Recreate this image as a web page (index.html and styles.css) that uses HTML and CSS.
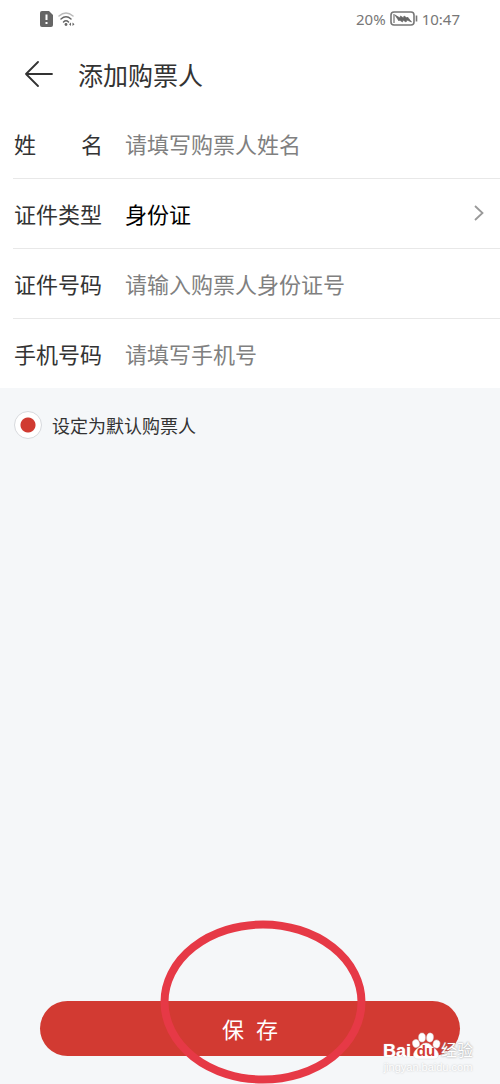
FILE: index.html
```html
<!DOCTYPE html>
<html lang="zh-CN">
<head>
<meta charset="utf-8">
<meta name="viewport" content="width=device-width, initial-scale=1">
<title>添加购票人</title>
<link rel="stylesheet" href="styles.css">
</head>
<body>
<div class="screen">
  <div class="status">
    <div class="status-group">
      <svg width="13" height="16" viewBox="0 0 13 16" aria-hidden="true">
        <path d="M2 0h7l4 4v10a2 2 0 0 1-2 2H2a2 2 0 0 1-2-2V2a2 2 0 0 1 2-2z" fill="#666"/>
        <path d="M6.500 3.500v5.500M6.500 11v2" stroke="#fff" stroke-width="2"/>
      </svg>
      <svg width="18" height="15" viewBox="0 0 18 15" fill="none" stroke-width="1.500" stroke-linecap="round" aria-hidden="true">
        <path d="M1 4Q8 -2 15 4" stroke="#bbb"/>
        <path d="M3 7Q8 2.500 13 7M5.500 10Q8 7.500 10.500 10" stroke="#666"/>
        <circle cx="8" cy="12.500" r="1.400" fill="#666"/>
        <path d="M13 10.500l-2 1.700 2 1.700zM14.500 10.500l2 1.700-2 1.700z" fill="#666"/>
      </svg>
    </div>
    <div class="status-group status-right">
      <span>20%</span>
      <svg width="28" height="16" viewBox="0 0 28 16" fill="none" stroke="#777" aria-hidden="true">
        <rect x="1" y="1" width="23" height="13" rx="3" stroke-width="1.600"/>
        <path d="M4 3v9" stroke="#aaa" stroke-width="2"/>
        <path d="M5 4l5 3 .5-2 3 2 .5-2 3 2 .5-1 4 5-4.500-2-1 2-3-2-.5 2-3-2-.5 1z" fill="#666" stroke="#666" stroke-width=".7"/>
        <path d="M26.500 4.500v6" stroke-width="1.600"/>
      </svg>
      <time>10:47</time>
    </div>
  </div>

  <header class="header">
    <button class="back" type="button" aria-label="返回">
      <svg width="28" height="26" viewBox="0 0 28 26" fill="none" stroke="#333" stroke-width="1.800" stroke-linecap="round" stroke-linejoin="round" aria-hidden="true">
        <path d="M27 13H1M13 1L1 13l12 12"/>
      </svg>
    </button>
    <h1 class="title">添加购票人</h1>
  </header>

  <form class="form">
    <div class="fields">
      <div class="row">
        <label class="label label-spread" for="name"><span>姓</span><span>名</span></label>
        <input class="input" id="name" type="text" placeholder="请填写购票人姓名">
      </div>
      <div class="row">
        <label class="label" for="type">证件类型</label>
        <select class="input select" id="type"><option>身份证</option></select>
        <svg width="10" height="16" viewBox="0 0 10 16" fill="none" stroke="#999" stroke-width="1.800" aria-hidden="true">
          <path d="M1 1l7.500 7L1 15"/>
        </svg>
      </div>
      <div class="row">
        <label class="label" for="number">证件号码</label>
        <input class="input" id="number" type="text" placeholder="请输入购票人身份证号">
      </div>
      <div class="row">
        <label class="label" for="phone">手机号码</label>
        <input class="input" id="phone" type="tel" placeholder="请填写手机号">
      </div>
    </div>

    <label class="default">
      <input class="radio" type="radio" checked>
      <span>设定为默认购票人</span>
    </label>

    <div class="footer">
      <button class="save" type="button"><span>保</span><span>存</span></button>
      <svg class="ring" width="206" height="164" viewBox="0 0 206 164" fill="none" aria-hidden="true">
        <ellipse cx="103" cy="82" rx="98.500" ry="77.500" stroke="#e63946" stroke-width="8"/>
      </svg>
      <div class="watermark">
        <div class="brand">
          <span>Bai</span>
          <span class="paw">
            <svg width="30" height="28" viewBox="0 0 30 28" fill="#fff" stroke="#ddd" stroke-width=".5" aria-hidden="true">
              <ellipse cx="5" cy="11.500" rx="3.400" ry="4" transform="rotate(-15 5 11.500)"/>
              <ellipse cx="11" cy="5.500" rx="3.400" ry="4.500"/>
              <ellipse cx="19" cy="5.500" rx="3.400" ry="4.500" transform="rotate(8 19 5.500)"/>
              <ellipse cx="25.500" cy="12" rx="3.400" ry="4" transform="rotate(15 25.500 12)"/>
              <path d="M15 11c-4 0-5 3-8 5-6 4-6 11 0 11h16c6 0 6-7 0-11-3-2-4-5-8-5z"/>
            </svg>
            <span class="du">du</span>
          </span>
          <span class="jingyan">经验</span>
        </div>
        <div class="domain">jingyan.baidu.com</div>
      </div>
    </div>
  </form>
</div>
</body>
</html>
```
FILE: styles.css
```css
* {
  box-sizing: border-box;
}

body {
  margin: 0;
  background: #f5f7f9;
  color: #333;
  font-family: "Noto Sans CJK SC", sans-serif;
}

button,
input,
select {
  margin: 0;
  padding: 0;
  border: 0;
  background: none;
  color: inherit;
  font-family: inherit;
}

svg {
  display: block;
  flex: none;
}

.screen {
  display: flex;
  flex-direction: column;
  min-height: 100vh;
}

.status {
  display: flex;
  justify-content: space-between;
  align-items: center;
  height: 38px;
  padding: 0 40px;
  background: #fff;
  color: #777;
  font-family: "Noto Sans", sans-serif;
  font-size: 15px;
}

.status-group {
  display: flex;
  align-items: center;
  gap: 5px;
}

.status-right {
  gap: 4px;
}

.header {
  display: flex;
  align-items: center;
  gap: 25px;
  height: 71px;
  padding: 0 25px;
  background: #fff;
}

.title {
  margin: 0;
  font-size: 25px;
  font-weight: 400;
}

.form {
  display: flex;
  flex: 1;
  flex-direction: column;
}

.fields {
  padding-left: 13px;
  background: #fff;
}

.row {
  display: flex;
  align-items: center;
  gap: 22px;
  height: 70px;
  padding: 0 16px 2px 1px;
  border-bottom: 1px solid #e8e8e8;
}

.row:last-child {
  height: 69px;
  border-bottom: 0;
}

.label {
  flex: none;
  width: 89px;
  font-size: 22px;
}

.label-spread {
  display: flex;
  justify-content: space-between;
}

.input {
  flex: 1;
  min-width: 0;
  height: 48px;
  outline: 0;
  color: #000;
  font-size: 22px;
}

.input::placeholder {
  color: #808080;
  opacity: 1;
}

.select {
  appearance: none;
}

.default {
  display: flex;
  align-items: center;
  gap: 10px;
  padding: 23px 14px;
  font-size: 18px;
  line-height: 28px;
}

.radio {
  appearance: none;
  width: 28px;
  height: 28px;
  border: 1px solid #d8dade;
  border-radius: 50%;
  background: radial-gradient(circle, #d03a31 7px, #fff 8px);
}

.footer {
  position: relative;
  margin-top: auto;
  padding: 0 40px 28px;
}

.save {
  display: flex;
  justify-content: center;
  align-items: center;
  gap: 12px;
  width: 100%;
  height: 55px;
  padding-bottom: 2px;
  border-radius: 28px;
  background: #d23a32;
  color: #fff;
  font-size: 22px;
}

.ring {
  position: absolute;
  bottom: 0;
  left: calc(50% - 90px);
}

.watermark {
  position: absolute;
  right: 27px;
  bottom: 10px;
  color: #fff;
}

.brand {
  display: flex;
  align-items: flex-end;
  font-family: "Liberation Sans", "Noto Sans CJK SC", sans-serif;
  font-size: 18px;
  font-weight: 700;
  line-height: 18px;
  text-shadow: 0 0 1px #ccc;
}

.paw {
  position: relative;
}

.du {
  position: absolute;
  right: 0;
  bottom: 0;
  left: 0;
  color: #d23a32;
  font-size: 15px;
  line-height: 18px;
  text-align: center;
  text-shadow: none;
}

.jingyan {
  font-size: 16px;
  font-weight: 400;
  text-shadow: 0 0 2px #888;
}

.domain {
  font-family: "Liberation Sans", sans-serif;
  font-size: 11px;
  line-height: 14px;
  text-align: center;
  text-shadow: 0 0 2px #bbb;
}
```
